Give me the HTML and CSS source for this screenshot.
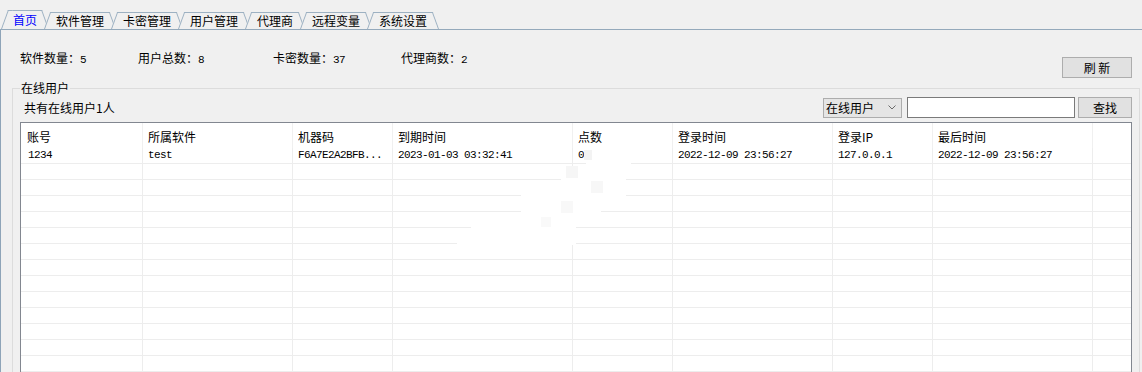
FILE: index.html
```html
<!DOCTYPE html>
<html lang="zh-CN">
<head>
<meta charset="utf-8">
<title>首页</title>
<link rel="stylesheet" href="styles.css">
</head>
<body>
<nav class="tabbar">
  <div class="tab active">首页</div>
  <div class="tab">软件管理</div>
  <div class="tab">卡密管理</div>
  <div class="tab">用户管理</div>
  <div class="tab">代理商</div>
  <div class="tab">远程变量</div>
  <div class="tab">系统设置</div>
</nav>
<main class="page">
  <div class="top">
    <div class="stats">
      <div>软件数量：<span class="num">5</span></div>
      <div>用户总数：<span class="num">8</span></div>
      <div>卡密数量：<span class="num">37</span></div>
      <div>代理商数：<span class="num">2</span></div>
    </div>
    <button class="btn refresh">刷 新</button>
  </div>
  <fieldset class="group">
    <legend>在线用户</legend>
    <div class="toolbar">
      <span class="count">共有在线用户1人</span>
      <div class="select"><span>在线用户</span><svg width="8" height="5" viewBox="0 0 8 5"><path d="M0.5 0.5 L4 4 L7.5 0.5" fill="none" stroke="#6a6a6a" stroke-width="1"/></svg></div>
      <input class="search" type="text">
      <button class="btn find">查找</button>
    </div>
    <div class="table">
      <div class="tr th"><span>账号</span><span>所属软件</span><span>机器码</span><span>到期时间</span><span>点数</span><span>登录时间</span><span>登录IP</span><span>最后时间</span><span></span></div>
      <div class="tr td"><span>1234</span><span>test</span><span>F6A7E2A2BFB...</span><span>2023-01-03 03:32:41</span><span>0</span><span>2022-12-09 23:56:27</span><span>127.0.0.1</span><span>2022-12-09 23:56:27</span><span></span></div>
      <div class="tr td"><span></span><span></span><span></span><span></span><span></span><span></span><span></span><span></span><span></span></div>
      <div class="tr td"><span></span><span></span><span></span><span></span><span></span><span></span><span></span><span></span><span></span></div>
      <div class="tr td"><span></span><span></span><span></span><span></span><span></span><span></span><span></span><span></span><span></span></div>
      <div class="tr td"><span></span><span></span><span></span><span></span><span></span><span></span><span></span><span></span><span></span></div>
      <div class="tr td"><span></span><span></span><span></span><span></span><span></span><span></span><span></span><span></span><span></span></div>
      <div class="tr td"><span></span><span></span><span></span><span></span><span></span><span></span><span></span><span></span><span></span></div>
      <div class="tr td"><span></span><span></span><span></span><span></span><span></span><span></span><span></span><span></span><span></span></div>
      <div class="tr td"><span></span><span></span><span></span><span></span><span></span><span></span><span></span><span></span><span></span></div>
      <div class="tr td"><span></span><span></span><span></span><span></span><span></span><span></span><span></span><span></span><span></span></div>
      <div class="tr td"><span></span><span></span><span></span><span></span><span></span><span></span><span></span><span></span><span></span></div>
      <div class="tr td"><span></span><span></span><span></span><span></span><span></span><span></span><span></span><span></span><span></span></div>
      <div class="tr td"><span></span><span></span><span></span><span></span><span></span><span></span><span></span><span></span><span></span></div>
      <div class="tr td"><span></span><span></span><span></span><span></span><span></span><span></span><span></span><span></span><span></span></div>
      <div class="tr td"><span></span><span></span><span></span><span></span><span></span><span></span><span></span><span></span><span></span></div>
      <svg class="blur" width="1110" height="140" viewBox="0 0 1110 140">
        <rect x="565" y="28" width="45" height="25" fill="#fff"/>
        <rect x="540" y="52" width="65" height="32" fill="#fff"/>
        <rect x="500" y="72" width="80" height="32" fill="#fff"/>
        <rect x="450" y="92" width="105" height="30" fill="#fff"/>
        <rect x="436" y="108" width="64" height="20" fill="#fff"/>
        <rect x="563" y="27" width="8" height="10" fill="#f3f3f3"/>
        <rect x="545" y="43" width="12" height="12" fill="#f6f6f6"/>
        <rect x="570" y="58" width="12" height="12" fill="#f7f7f7"/>
        <rect x="540" y="78" width="12" height="12" fill="#f8f8f8"/>
        <rect x="520" y="94" width="10" height="10" fill="#f9f9f9"/>
      </svg>
    </div>
  </fieldset>
</main>
</body>
</html>
```
FILE: styles.css
```css
html, body {
  margin: 0;
  padding: 0;
}
body {
  width: 1142px;
  height: 372px;
  overflow: hidden;
  background: #f0f0f0;
  color: #000;
  font-family: "Noto Sans CJK SC", "Microsoft YaHei", sans-serif;
  font-size: 12px;
}

/* tabs */
.tabbar {
  display: flex;
  align-items: flex-end;
  height: 29px;
  border-bottom: 1px solid #94a9bb;
  padding-left: 1px;
}
.tab {
  position: relative;
  isolation: isolate;
  height: 17px;
  line-height: 17px;
  padding: 0 12px;
  margin-right: -5px;
  white-space: nowrap;
}
.tab::before,
.tab::after {
  content: "";
  position: absolute;
  z-index: -1;
  top: 0;
  bottom: 0;
  width: 60%;
  background: #f0f0f0;
  border-top: 1px solid #9db1c2;
}
.tab::before {
  left: 0;
  border-left: 1px solid #9db1c2;
  transform: skewX(-20deg);
  transform-origin: left bottom;
}
.tab::after {
  right: 0;
  border-right: 1px solid #9db1c2;
  transform: skewX(20deg);
  transform-origin: right bottom;
}
.tab.active {
  height: 19px;
  line-height: 19px;
  color: #0000ff;
}

/* page */
.page {
  border-left: 1px solid #8ea4b8;
  height: 342px;
}
.top {
  display: flex;
  align-items: flex-start;
  height: 51px;
}
.stats {
  display: grid;
  grid-template-columns: 118px 135px 128px auto;
  margin: 20px 0 0 19px;
  line-height: 16px;
}
.num {
  font-family: "Liberation Mono", monospace;
  font-size: 11px;
  letter-spacing: -0.6px;
}
.btn {
  height: 21px;
  box-sizing: border-box;
  border: 1px solid #adadad;
  background: #e1e1e1;
  font: inherit;
  color: #000;
  padding: 0;
  display: flex;
  align-items: center;
  justify-content: center;
}
.refresh {
  width: 70px;
  margin: 27px 10px 0 auto;
}

/* group box */
.group {
  margin: 0 2px 0 11px;
  padding: 0 7px;
  border: 1px solid #dcdcdc;
  height: 300px;
  min-width: 0;
}
.group legend {
  padding: 0 1px;
  line-height: 14px;
  font-size: 12px;
}
.toolbar {
  display: flex;
  align-items: center;
  height: 21px;
  margin-top: 2px;
}
.count {
  padding-left: 4px;
}
.select {
  margin-left: auto;
  width: 79px;
  height: 20px;
  box-sizing: border-box;
  border: 1px solid #adadad;
  background: #e5e5e5;
  display: flex;
  align-items: center;
  justify-content: space-between;
  padding: 0 5px 0 2px;
}
.search {
  margin: 0 0 0 5px;
  width: 168px;
  height: 21px;
  box-sizing: border-box;
  border: 1px solid #7a7a7a;
  background: #fff;
  padding: 0;
}
.find {
  width: 54px;
  margin-left: 3px;
}

/* table */
.table {
  position: relative;
  margin-top: 4px;
  border: 1px solid #828790;
  border-bottom: none;
  background: #fff;
  overflow: hidden;
}
.tr {
  display: grid;
  grid-template-columns: 122px 150px 100px 180px 100px 160px 100px 160px 1fr;
}
.tr > span {
  border-right: 1px solid #ededed;
  padding-left: 5px;
  overflow: hidden;
  white-space: nowrap;
}
.tr > span:first-child {
  padding-left: 6px;
}
.tr > span:last-child {
  border-right: none;
}
.th {
  height: 25px;
  line-height: 25px;
}
.th > span {
  padding-top: 1px;
  border-right-color: #f0f0f0;
}
.td {
  height: 16px;
  box-sizing: border-box;
  border-bottom: 1px solid #ededed;
  line-height: 15px;
  font-family: "Liberation Mono", monospace;
  font-size: 11px;
  letter-spacing: -0.6px;
}
.td > span:first-child {
  padding-left: 7px;
}
.blur {
  position: absolute;
  left: 0;
  top: 0;
  pointer-events: none;
}
```
